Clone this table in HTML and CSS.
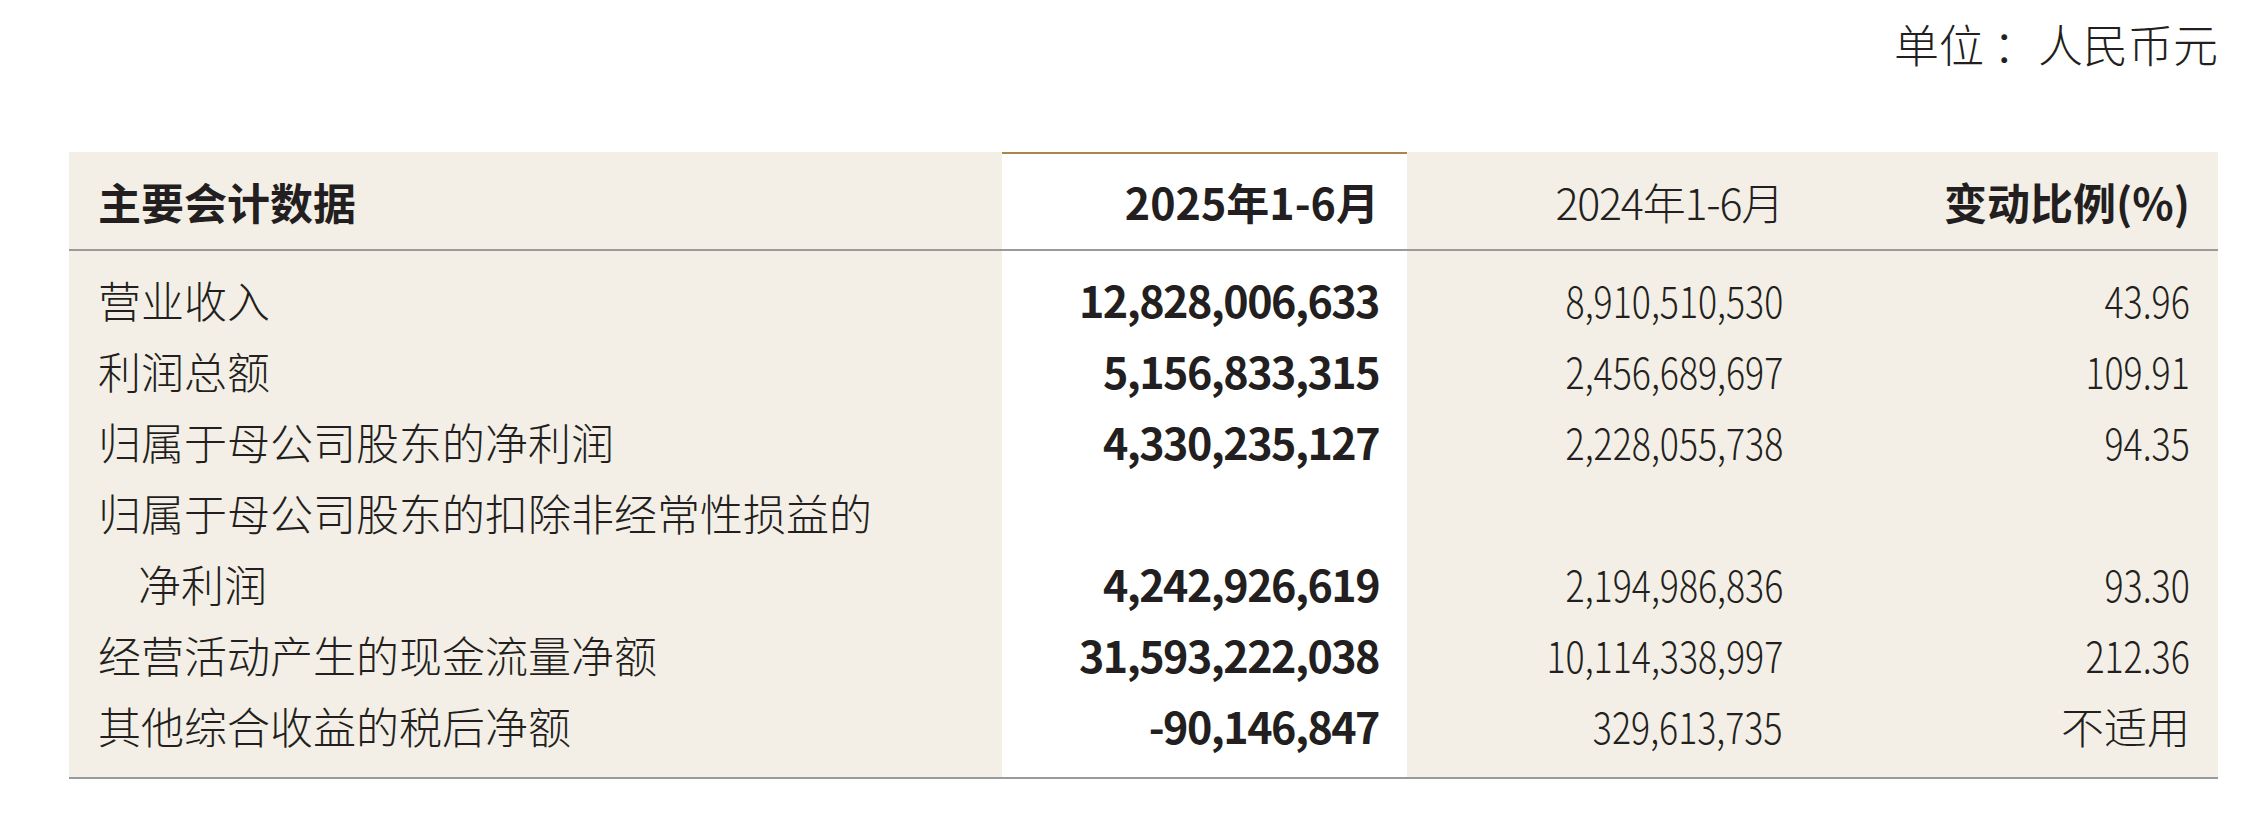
FILE: index.html
```html
<!DOCTYPE html>
<html lang="zh-CN">
<head>
<meta charset="utf-8">
<title>主要会计数据</title>
<link rel="stylesheet" href="styles.css">
</head>
<body>
<div class="page">
  <div class="unit">单位<span class="colon">：</span>人民币元</div>
  <table class="data">
    <colgroup>
      <col class="c-label">
      <col class="c-cur">
      <col class="c-prev">
      <col class="c-chg">
    </colgroup>
    <thead>
      <tr>
        <th class="label bold">主要会计数据</th>
        <th class="cur bold">2025年1-6月</th>
        <th class="num prev-head">2024年1-6月</th>
        <th class="num bold">变动比例(%)</th>
      </tr>
    </thead>
    <tbody>
      <tr class="first">
        <td class="label">营业收入</td>
        <td class="cur bold">12,828,006,633</td>
        <td class="num"><span class="n">8,910,510,530</span></td>
        <td class="num"><span class="n">43.96</span></td>
      </tr>
      <tr>
        <td class="label">利润总额</td>
        <td class="cur bold">5,156,833,315</td>
        <td class="num"><span class="n">2,456,689,697</span></td>
        <td class="num"><span class="n">109.91</span></td>
      </tr>
      <tr>
        <td class="label">归属于母公司股东的净利润</td>
        <td class="cur bold">4,330,235,127</td>
        <td class="num"><span class="n">2,228,055,738</span></td>
        <td class="num"><span class="n">94.35</span></td>
      </tr>
      <tr>
        <td class="label">归属于母公司股东的扣除非经常性损益的</td>
        <td class="cur"></td>
        <td class="num"></td>
        <td class="num"></td>
      </tr>
      <tr>
        <td class="label indent">净利润</td>
        <td class="cur bold">4,242,926,619</td>
        <td class="num"><span class="n">2,194,986,836</span></td>
        <td class="num"><span class="n">93.30</span></td>
      </tr>
      <tr>
        <td class="label">经营活动产生的现金流量净额</td>
        <td class="cur bold">31,593,222,038</td>
        <td class="num"><span class="n">10,114,338,997</span></td>
        <td class="num"><span class="n">212.36</span></td>
      </tr>
      <tr class="last">
        <td class="label">其他综合收益的税后净额</td>
        <td class="cur bold">-90,146,847</td>
        <td class="num"><span class="n">329,613,735</span></td>
        <td class="num">不适用</td>
      </tr>
    </tbody>
  </table>
</div>
</body>
</html>
```

FILE: styles.css
```css
html, body {
  margin: 0;
  padding: 0;
  background: #ffffff;
}

body {
  font-family: "Noto Sans CJK SC", "Noto Sans", sans-serif;
  color: #231f20;
}

.page {
  padding: 14px 46px 0 69px;
}

.unit {
  text-align: right;
  font-size: 45px;
  line-height: 60px;
  font-weight: 300;
}

.unit .colon {
  padding-left: 0.2em;
}

.data {
  margin-top: 78px;
  width: 2149px;
  table-layout: fixed;
  border-collapse: separate;
  border-spacing: 0;
  font-size: 43px;
}

.c-label { width: 933px; }
.c-cur { width: 405px; }
.c-prev { width: 404px; }
.c-chg { width: 407px; }

.data th,
.data td {
  background: #f3efe6;
  padding: 0 28px;
  text-align: right;
  white-space: nowrap;
  font-weight: 300;
}

.data th {
  height: 97px;
  line-height: 50px;
  vertical-align: middle;
  border-bottom: 2px solid #9a9a9a;
}

.data td {
  line-height: 71px;
  vertical-align: middle;
}

.data .label {
  text-align: left;
  padding-left: 29px;
}

.data .indent {
  padding-left: 69px;
}

.data .cur {
  background: #ffffff;
}

.data .bold {
  font-weight: 700;
}

.data td.cur.bold {
  letter-spacing: -1.5px;
}

.data .prev-head {
  letter-spacing: -1.2px;
}

.data .n {
  display: inline-block;
  transform: scaleX(0.83);
  transform-origin: right center;
}

.data th.cur {
  box-shadow: inset 0 2px 0 #a8874a;
}

.data tr.first td {
  padding-top: 13px;
}

.data tr.last td {
  padding-bottom: 16px;
  border-bottom: 2px solid #9a9a9a;
}

.data tr.last td.cur {
  box-shadow: 0 2px 0 #a8874a;
}
```
